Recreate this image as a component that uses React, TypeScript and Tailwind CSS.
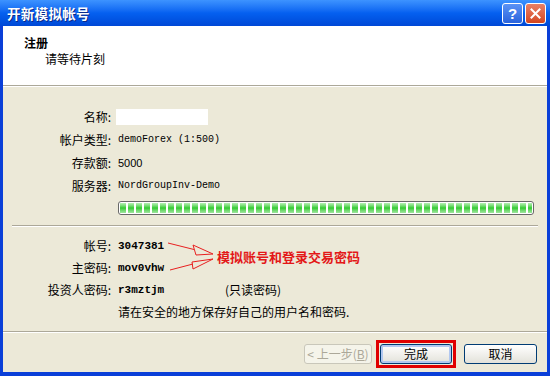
import React from 'react';

const cjk = "font-['Noto_Sans_CJK_SC',sans-serif]";

function Row({ label, children, h = 'h-[23px]' }: { label: string; children?: React.ReactNode; h?: string }) {
  return (
    <div className={`flex ${h} items-center leading-[14px]`}>
      <div className="w-[108px] text-right">{label}</div>
      <div className="ml-[7px] flex items-center">{children}</div>
    </div>
  );
}

function Separator({ inset = false }: { inset?: boolean }) {
  return (
    <div className={inset ? 'mx-[9px]' : ''}>
      <div className="h-px bg-[#ACA899]" />
      <div className="h-px bg-white" />
    </div>
  );
}

function ProgressBar() {
  const segments = Array.from({ length: 52 }, (_, i) => i);
  return (
    <div className="ml-[115px] mt-[4px] h-[14px] w-[416px] rounded-[3px] border border-[#686868] bg-white p-px">
      <div className="flex h-full gap-[2px] overflow-hidden">
        {segments.map((i) => (
          <div
            key={i}
            className="h-full w-[6px] shrink-0 bg-linear-to-b from-[#b4f0b4] via-[#2ecb2e] to-[#9ee69e]"
          />
        ))}
      </div>
    </div>
  );
}

function XpButton({ children, disabled, primary, width = 'w-[73px]' }: { children: React.ReactNode; disabled?: boolean; primary?: boolean; width?: string }) {
  if (disabled) {
    return (
      <div className={`flex h-[20px] ${width} items-center justify-center rounded-[3px] border border-[#C9C7BA] bg-[#F5F4EA] text-[12px] leading-none text-[#ACA899]`}>
        {children}
      </div>
    );
  }
  return (
    <div
      className={`flex h-[20px] ${width} items-center justify-center rounded-[3px] border border-[#003C74] bg-linear-to-b from-white to-[#E3E2DA] text-[12px] leading-none text-black ${
        primary ? 'shadow-[inset_0_0_0_2px_#B2C8F0]' : ''
      }`}
    >
      {children}
    </div>
  );
}

export default function App() {
  return (
    <div className={`relative flex h-[376px] w-[550px] flex-col bg-[#0A3FD8] text-[12px] text-black ${cjk}`}>
      {/* title bar */}
      <div className="flex h-[26px] shrink-0 items-center bg-linear-to-b from-[#3D93FF] via-[#0560F0] to-[#0048D6] pl-[7px] pr-[4px]">
        <span className="text-[13.5px] font-bold tracking-[0.3px] text-white [text-shadow:1px_1px_0_#0A2A8A]">开新模拟帐号</span>
        <div className="ml-auto flex gap-[2px]">
          <div className="flex h-[21px] w-[21px] items-center justify-center rounded-[3px] border border-white bg-linear-to-b from-[#5B93F5] to-[#2A63DC] text-[15px] font-bold leading-none text-white font-['Liberation_Sans',sans-serif]">
            ?
          </div>
          <div className="flex h-[21px] w-[21px] items-center justify-center rounded-[3px] border border-white bg-linear-to-b from-[#E98066] to-[#D4461E]">
            <svg width="11" height="11" viewBox="0 0 11 11">
              <path d="M1.5 1.5 L9.5 9.5 M9.5 1.5 L1.5 9.5" stroke="white" strokeWidth="2" strokeLinecap="square" />
            </svg>
          </div>
        </div>
      </div>

      {/* window body */}
      <div className="flex flex-1 flex-col border-x-[3px] border-b-[4px] border-[#0A3FD8] bg-[#ECE9D8]">
        {/* header */}
        <div className="h-[59px] shrink-0 bg-white pl-[21px] pt-[10px] leading-[14px]">
          <div className="font-bold">注册</div>
          <div className="ml-[21px] mt-[2px]">请等待片刻</div>
        </div>
        <Separator />

        {/* account info */}
        <div className="pt-[18px]">
          <Row label="名称:">
            <div className="-ml-[2px] h-[16px] w-[92px] bg-white" />
          </Row>
          <Row label="帐户类型:">
            <span className="font-['Liberation_Mono',monospace] text-[10px]">demoForex (1:500)</span>
          </Row>
          <Row label="存款额:">
            <span className="font-['Liberation_Sans',sans-serif] text-[11px]">5000</span>
          </Row>
          <Row label="服务器:">
            <span className="font-['Liberation_Mono',monospace] text-[10px]">NordGroupInv-Demo</span>
          </Row>
          <ProgressBar />
        </div>
        <div className="mt-[10px]">
          <Separator inset />
        </div>

        {/* credentials */}
        <div className="pt-[8px]">
          <Row label="帐号:" h="h-[22px]">
            <span className="font-['Liberation_Mono',monospace] text-[11px] font-bold">3047381</span>
          </Row>
          <Row label="主密码:" h="h-[22px]">
            <span className="font-['Liberation_Mono',monospace] text-[11px] font-bold">mov0vhw</span>
          </Row>
          <Row label="投资人密码:" h="h-[22px]">
            <span className="w-[107px] font-['Liberation_Mono',monospace] text-[11px] font-bold">r3mztjm</span>
            <span>(只读密码)</span>
          </Row>
          <Row label="" h="h-[22px]">
            <span>请在安全的地方保存好自己的用户名和密码.</span>
          </Row>
        </div>

        <div className="mt-[8px]">
          <Separator />
        </div>

        {/* buttons */}
        <div className="flex flex-1 items-start justify-end pr-[10px] pt-[7px]">
          <div className="mt-[4px]">
            <XpButton disabled width="w-[68px]">
              &lt; 上一步(<span className="underline">B</span>)
            </XpButton>
          </div>
          <div className="ml-[4px] border-[3px] border-[#E00000] p-px">
            <XpButton primary width="w-[72px]">完成</XpButton>
          </div>
          <div className="ml-[8px] mt-[4px]">
            <XpButton>取消</XpButton>
          </div>
        </div>
      </div>

      {/* annotation */}
      <svg className="absolute left-[160px] top-[235px]" width="60" height="40" viewBox="0 0 60 40">
        <g stroke="#E82020" strokeWidth="1" fill="none">
          <path d="M8 8 L34 14.5" />
          <path d="M33 10 L53 19 L36 20 Z" />
          <path d="M10 35 L33 29" />
          <path d="M32 27 L53 24 L33 34 Z" />
        </g>
      </svg>
      <span className="absolute left-[217px] top-[250px] text-[13px] font-bold leading-[14px] text-[#E31818]">
        模拟账号和登录交易密码
      </span>
    </div>
  );
}
